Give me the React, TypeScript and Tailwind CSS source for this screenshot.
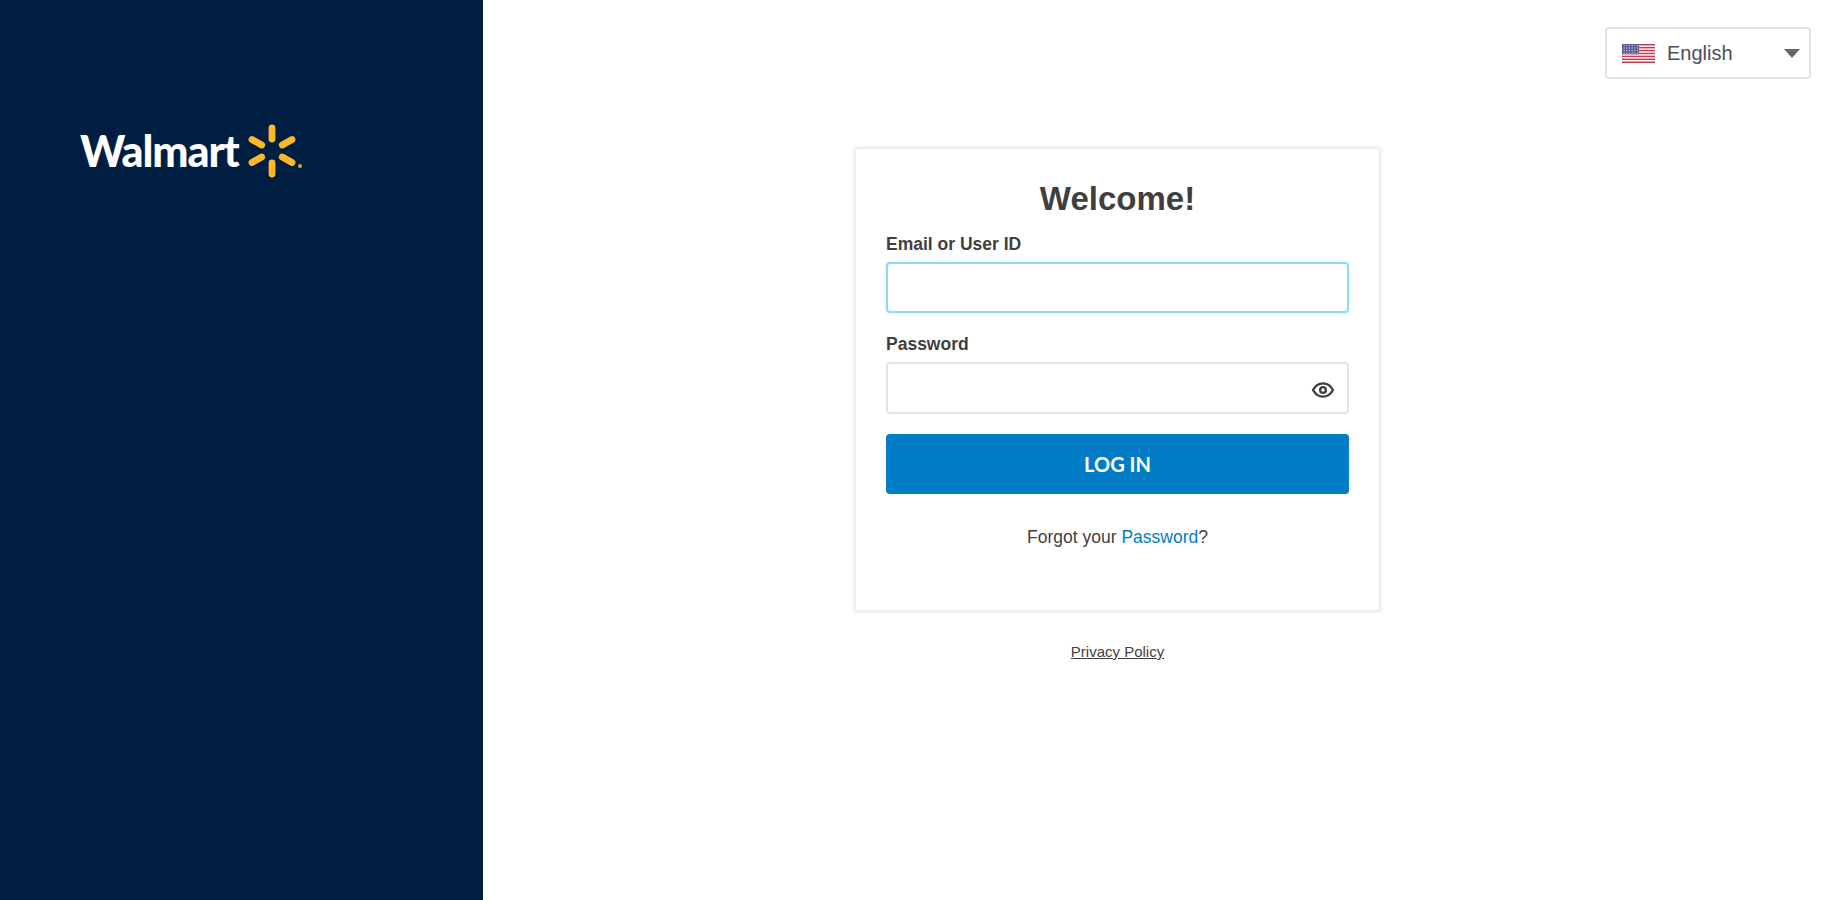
import React from 'react';

function Spark() {
  const angles = [0, 60, 120, 180, 240, 300];
  return (
    <svg width="54" height="54" viewBox="0 0 54 54" className="shrink-0">
      {angles.map(a => (
        <rect key={a} x="23.6" y="0.5" width="6.8" height="18" rx="3.4" fill="#fdb827" transform={`rotate(${a} 27 27)`} />
      ))}
    </svg>
  );
}

function UsFlag() {
  const stripes = [0, 2, 4, 6, 8, 10, 12];
  return (
    <svg width="33" height="19" viewBox="0 0 33 19" className="shrink-0">
      <rect width="33" height="19" fill="#fff" />
      {stripes.map(i => (
        <rect key={i} x="0" y={i * 1.46} width="33" height="1.46" fill="#c4374c" />
      ))}
      <rect width="17" height="10.2" fill="#55568a" />
      {[1.5, 4, 6.5, 9].map(y =>
        [1.5, 4.2, 6.9, 9.6, 12.3, 15].map(x => <rect key={`${x}-${y}`} x={x} y={y - 0.6} width="1.2" height="1.2" fill="#d8d8e8" />)
      )}
    </svg>
  );
}

function Eye() {
  return (
    <svg width="24" height="24" viewBox="0 0 24 24" fill="none" stroke="#3f3f3f" strokeWidth="2.3">
      <path d="M2 12c2.400-4.400 5.800-6.600 10-6.600s7.600 2.200 10 6.600c-2.400 4.400-5.800 6.600-10 6.600S4.400 16.400 2 12z" />
      <circle cx="12" cy="12" r="2.900" />
    </svg>
  );
}

export default function App() {
  return (
    <div className="flex h-screen bg-white font-['Liberation_Sans',Arial,sans-serif] text-[#3f3f3f] overflow-hidden">
      {/* Left brand panel */}
      <div className="w-[483px] shrink-0 bg-[#001e42] pl-[80px] pt-[124px]">
        <div className="flex items-center gap-[6px]">
          <span className="font-['Lato',sans-serif] font-black text-[43px] leading-[54px] tracking-[-1.1px] text-white">Walmart</span>
          <div className="relative">
            <Spark />
            <span className="absolute right-[-3px] bottom-[10px] w-[4px] h-[4px] rounded-full bg-[#d9a22a]" />
          </div>
        </div>
      </div>

      {/* Main */}
      <div className="flex-1 flex flex-col">
        <div className="flex justify-end pt-[27px] pr-[15px]">
          <div className="w-[206px] h-[52px] flex items-center border-2 border-[#e0e3e6] rounded-[4px] pl-[15px] pr-[9px]">
            <UsFlag />
            <span className="ml-[12px] text-[20px] text-[#4a4f5c] flex-1">English</span>
            <span className="w-0 h-0 border-l-[8px] border-r-[8px] border-t-[9px] border-l-transparent border-r-transparent border-t-[#666]" />
          </div>
        </div>

        <div className="flex flex-col items-center mt-[69px] pr-[74px]">
          <div className="w-[525px] h-[463px] bg-white border border-[#ebebeb] shadow-[0_0_5px_rgba(0,0,0,0.15)] px-[30px] pt-[28px]">
            <h1 className="text-center text-[33px] leading-[44px] font-bold text-[#3f3f3f]">Welcome!</h1>
            <label className="block mt-[12px] text-[17.5px] leading-[22px] font-bold">Email or User ID</label>
            <input className="block mt-[7px] w-full h-[51px] border-2 border-[#8fd8ff] rounded-[4px] outline-none shadow-[0_0_2px_rgba(143,216,255,0.7)]" />
            <label className="block mt-[20px] text-[17.5px] leading-[22px] font-bold">Password</label>
            <div className="relative mt-[7px]">
              <input className="block w-full h-[52px] border-2 border-[#e0e3e6] rounded-[4px] outline-none" />
              <span className="absolute right-[14px] top-[16px]">
                <Eye />
              </span>
            </div>
            <button className="block mt-[20px] w-full h-[60px] rounded-[4px] bg-[#007dc6] text-white font-['Lato',sans-serif] font-bold text-[20px]">
              LOG IN
            </button>
            <p className="mt-[32px] text-center text-[17.5px] leading-[22px]">
              Forgot your <a className="text-[#007dc6]">Password</a>?
            </p>
          </div>
          <a className="mt-[32px] text-[15px] leading-[18px] underline text-[#3f3f3f]">Privacy Policy</a>
        </div>
      </div>
    </div>
  );
}
